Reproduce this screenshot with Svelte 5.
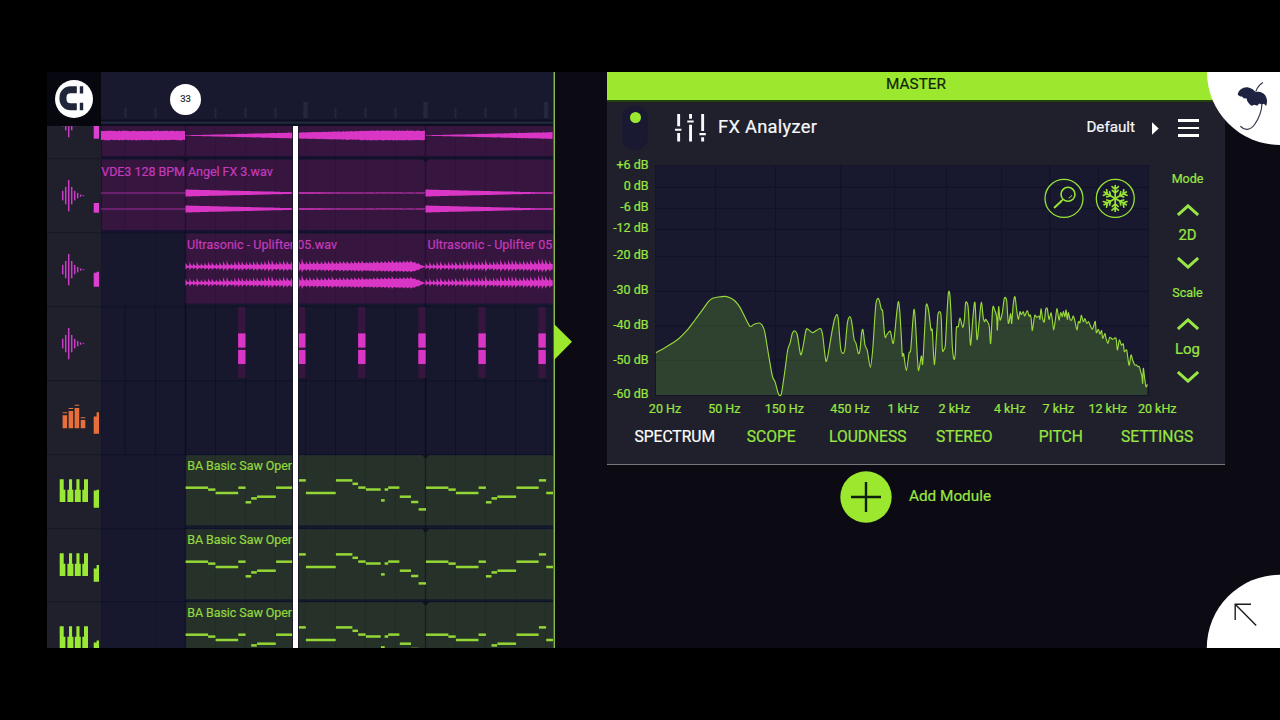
<script>
  // ---------- playlist geometry ----------
  const LANE_W = 452;
  const gridX = [24, 54.5, 114.5, 144.5, 174.5, 204.5, 234.5, 264.5, 294.5, 354.5, 384.5, 414.5, 444.5];
  const barX = [84.5, 324.5];
  const ticks = [24.5, 54.5, 114.5, 144.5, 174.5, 234.5, 264.5, 294.5, 354.5, 384.5, 414.5];
  const tallTicks = [204.5, 324.5, 445];

  // ---------- waveforms ----------
  const noise = (i) => {
    const v = Math.sin(i * 12.9898) * 43758.5453;
    return v - Math.floor(v);
  };
  function wave(x0, x1, cy, amp, step = 0.6) {
    const top = [];
    const bottom = [];
    for (let x = x0, i = 0; x <= x1; x += step, i++) {
      top.push(`${x.toFixed(1)},${(cy - amp(x - x0, i, 1)).toFixed(2)}`);
      bottom.push(`${x.toFixed(1)},${(cy + amp(x - x0, i + 500, 0.6)).toFixed(2)}`);
    }
    return 'M' + top.join('L') + 'L' + bottom.reverse().join('L') + 'Z';
  }
  const steady = (x, i) => 4.1 + noise(i) * 0.9;
  const rise = (x, i) => Math.min(4.9, 0.25 + x * 0.025) * (0.88 + noise(i) * 0.17);
  const fall = (x, i) => (x < 110 ? 3.4 - x * 0.0245 : Math.max(0.35, 0.7 - (x - 110) * 0.005)) + noise(i) * 0.15;
  const pulse = (x, i, side) => {
    const body = 0.9 + Math.pow(x / 240, 1.1) * 3.6;
    const phase = (x % 3.75) / 3.75;
    const reach = x < 78 ? 5.4 : x < 125 ? 6.6 : 4.6 - (x - 125) * 0.014;
    const spike = Math.pow(1 - phase, 3) * reach * side * (0.65 + noise(Math.floor(x / 3.75)) * 0.5);
    const tail = x > 228 ? Math.max(0.15, (240 - x) / 12) : 1;
    return (body + spike) * tail;
  };

  const row0 = [wave(0, 84, 51.5, steady), wave(84.5, 324, 51.5, rise), wave(325, 452, 51.5, rise)];
  const row1 = [35, 51].flatMap((y) => [wave(84.5, 324, y, fall), wave(324.5, 452, y, fall)]);
  const row2 = [34.8, 51.1].flatMap((y) => [wave(84.5, 324.5, y, pulse), wave(324.5, 452, y, pulse)]);
  const hits = [137.1, 197.1, 257.1, 317.3, 377.4, 437.4];

  // ---------- note pattern: x, width, y ----------
  const notes = [
    [0, 22.5, 33.7], [22.5, 7.3, 35.6], [30, 22.6, 39], [52.7, 7.3, 33.7], [60, 5.6, 48.3],
    [65.6, 5.6, 44.4], [71.5, 18.7, 42.7], [90.5, 22.3, 33.7], [113, 7.2, 26.4], [120.3, 29.8, 39],
    [150.3, 16.5, 26.4], [166.9, 5.5, 29.8], [172.6, 7.4, 33.6], [180.3, 14.8, 35.5], [195.4, 3.7, 46.4],
    [199, 3.6, 35.5], [202.6, 11.2, 33.6], [214.2, 11.2, 42.7], [225.5, 7.2, 48], [233, 7.4, 55.4]
  ];

  const waveBars = [[15.7, 9.6], [18.7, 17.4], [21.7, 31.4], [24.7, 17.4], [27.7, 9.4], [30.7, 5.4], [33.7, 2.2], [36.5, 1]];

  const tracks = [
    { kind: 'audio', h: 32, y: 42, meter: [40, 40] },
    { kind: 'audio', h: 74, y: 0, meter: [45, 45] },
    { kind: 'audio', h: 74, y: 0, meter: [40.7, 39.7] },
    { kind: 'audio', h: 74, y: 0, meter: null },
    { kind: 'drums', h: 74, y: 0, meter: [36.5, 32.3] },
    { kind: 'keys', h: 74, y: 0, meter: [36.5, 35.7] },
    { kind: 'keys', h: 73, y: 0, meter: [40.5, 37] },
    { kind: 'keys', h: 47, y: 0, meter: [41.5, 39.5] }
  ];
  const tint = { audio: '#dd3fd0', drums: '#e76f3c', keys: '#9ae835' };

  // ---------- spectrum ----------
  const dbLabels = [['+6 dB', 15.2], ['0 dB', 36], ['-6 dB', 57], ['-12 dB', 78], ['-20 dB', 105.2], ['-30 dB', 140.2], ['-40 dB', 175.2], ['-50 dB', 209.8], ['-60 dB', 244.3]];
  const hLines = [33.3, 54.3, 75.3, 102.5, 137.3, 171.8, 206.3];
  const vLines = [108.5, 168.5, 233.7, 287.5, 339.5, 394.5, 442.7, 491.5];
  const hzLabels = [['20 Hz', 58], ['50 Hz', 117.3], ['150 Hz', 177.3], ['450 Hz', 243], ['1 kHz', 296.2], ['2 kHz', 347.3], ['4 kHz', 402.7], ['7 kHz', 451.3], ['12 kHz', 500.7], ['20 kHz', 550.2]];

  const low = [
    168,248, 200,230, 235,207, 260,182, 285,150, 310,116, 325,95, 338,85, 355,81, 375,79, 390,83, 405,93, 420,112, 435,142, 450,169,
    462,163, 478,159, 486,165, 494,185, 505,250, 517,318, 525,335, 533,365, 537,375, 543,375, 547,355, 555,300, 563,240, 570,220,
    577,190, 585,183, 592,195, 602,254, 610,225, 618,180, 624,178, 637,188, 650,181, 662,176, 668,195, 677,270, 683,260, 695,190,
    703,150, 711,134, 715,150, 722,235, 729,250, 735,235, 742,160, 749,140, 755,155, 762,207, 768,220, 775,250, 780,240
  ];
  const high = [
    5,188, 9,180, 15,225, 22,242, 31,292, 38,240, 44,150, 48,100, 53,85, 58,92, 64,118, 68,124, 73,185, 76,203, 80,195, 91,184, 98,218,
    102,210, 110,130, 115,95, 119,120, 124,200, 127,257, 131,252, 139,302, 147,250, 152,240, 158,160, 162,118, 166,150, 172,260,
    176,302, 184,258, 188,282, 194,180, 198,108, 202,105, 207,130, 213,180, 217,182, 223,284, 230,190, 234,132, 241,127, 244,150,
    247,238, 251,240, 256,225, 261,130, 265,70, 269,70, 273,130, 277,230, 282,268, 286,250, 289,175, 295,170, 300,144, 308,172,
    313,150, 317,98, 324,108, 328,170, 332,225, 339,140, 345,98, 351,208, 358,150, 364,97, 370,145, 374,155, 377,148, 384,158,
    388,170, 392,220, 398,115, 404,120, 410,140, 412,180, 416,110, 420,150, 427,128, 433,85, 440,92, 445,160, 452,130, 455,160,
    460,100, 465,80, 470,120, 475,148, 480,125, 484,134, 490,125, 494,138, 502,122, 507,138, 511,135, 514,150, 517,182, 522,148,
    525,135, 530,142, 537,138, 540,147, 543,116, 548,147, 553,155, 557,118, 562,117, 567,148, 573,128, 577,150, 581,180, 586,150,
    591,115, 597,150, 602,128, 607,140, 610,124, 615,140, 618,120, 622,148, 625,127, 630,148, 635,150, 640,138, 645,155, 651,180,
    655,155, 660,158, 664,136, 670,155, 675,146, 680,160, 686,155, 690,165, 697,178, 702,165, 706,155, 709,188, 715,178, 720,192,
    725,182, 728,205, 735,190, 738,205, 744,220, 749,202, 758,208, 768,205, 772,240, 778,210, 784,225, 790,222, 793,245, 800,240,
    805,275, 808,285, 813,255, 818,270, 824,285, 830,285, 833,290, 838,290, 842,305, 846,320, 848,340, 850,295, 854,325, 858,350, 862,343
  ];
  const points = [];
  for (let i = 0; i < low.length; i += 2) points.push([(low[i] - 21) / 3, (low[i + 1] + 348) / 3]);
  for (let i = 0; i < high.length; i += 2) points.push([(high[i] + 759) / 3, (high[i + 1] + 348) / 3]);

  let curve = `M${points[0].join(',')}`;
  for (let i = 0; i < points.length - 1; i++) {
    const a = points[Math.max(0, i - 1)];
    const b = points[i];
    const c = points[i + 1];
    const d = points[Math.min(points.length - 1, i + 2)];
    const k = 7;
    const f = (n) => n.toFixed(2);
    curve += `C${f(b[0] + (c[0] - a[0]) / k)},${f(b[1] + (c[1] - a[1]) / k)} ${f(c[0] - (d[0] - b[0]) / k)},${f(c[1] - (d[1] - b[1]) / k)} ${f(c[0])},${f(c[1])}`;
  }
  const area = curve + 'V241H49Z';

  const tabs = ['SPECTRUM', 'SCOPE', 'LOUDNESS', 'STEREO', 'PITCH', 'SETTINGS'];
  const arms = [0, 60, 120, 180, 240, 300];
</script>

<div class="page">
  <div class="screen">
    <section class="playlist">
      <div class="top">
        <div class="corner">
          <svg width="38" height="38" viewBox="0 0 38 38">
            <circle cx="19" cy="19" r="19" fill="#fdffff" />
            <path d="M21.8 9.7H15.5A7.5 7.5 0 0 0 8 17.2V19.2A7.5 7.5 0 0 0 15.5 26.7H21.8" fill="none" stroke="#20263a" stroke-width="7" />
            <path d="M24.8 6.2h3.4v7.4h-3.4zM24.8 22.8h3.4v7.4h-3.4z" fill="#20263a" />
          </svg>
        </div>
        <div class="ruler">
          <svg width={LANE_W} height="54">
            {#each ticks as x}<rect x={x - 1} y="36" width="2" height="10" fill="#25273d" />{/each}
            {#each tallTicks as x}<rect x={x - 2.2} y="30" width="4.4" height="16" fill="#25273d" />{/each}
            <rect y="47.5" width="452" height="6.5" fill="#0d0f20" />
            <rect y="49.4" width="452" height="2.4" fill="#20283b" />
          </svg>
          <span class="marker">33</span>
        </div>
      </div>

      <div class="tracks">
        {#each tracks as t, n}
          <div class="track" style:height="{t.h}px">
            <svg class="head" width="54" height={t.h} viewBox="0 {t.y} 54 {t.h}">
              <rect y="0" width="54" height="1.3" fill="#171823" />
              {#if t.kind === 'audio'}
                {#each waveBars as [x, h]}
                  <rect x={x - 0.75} y={37.6 - h / 2} width="1.5" height={h} fill="#cb3cc6" />
                {/each}
              {:else if t.kind === 'drums'}
                <path fill={tint.drums} d="M15.6 35.3h4.5v13h-4.5zM21.6 31h4.6v17.3h-4.6zM27.6 28h4.6v20.3h-4.6zM33.7 40h4.6v8.3h-4.6zM15.6 32.2h4.5v1h-4.5zM21.6 28h4.6v1h-4.6zM27.6 24.8h4.6v1h-4.6zM33.7 37.3h4.6v1h-4.6z" />
              {:else}
                <path fill={tint.keys} d="M12.7 25.3h4v10.5h1.7V48h-5.7zM22 25.3h3.1v10.5h1.3V48h-6V35.8H22zM29.4 25.3h3.1v10.5h1.3V48h-6V35.8h1.6zM37 25.3h4V48h-5.7V35.8H37z" />
              {/if}
              {#if t.meter}
                {@const base = t.kind === 'audio' ? 54.7 : 53.7}
                <path fill={tint[t.kind]} d="M46.7 {base}V{t.meter[0]}h2.9V{t.meter[1]}H52V{base}z" />
              {/if}
            </svg>

            <svg class="lane" width={LANE_W} height={t.h} viewBox="0 {t.y} {LANE_W} {t.h}">
              <rect y="-0.6" width="452" height="1.8" fill="#10112a" />
              {#if n === 0}
                <rect y="0" width="452" height="72.3" fill="#36163f" />
              {:else if n === 1}
                <rect y="1.5" width="452" height="70.5" fill="#36163f" />
                <rect y="72" width="452" height="2" fill="#161230" />
              {:else if n === 2}
                <rect x="84.5" y="1.5" width="368" height="70" fill="#36163f" />
              {:else if n > 4}
                <rect x="84.5" y="1.2" width="368" height="70.3" fill="#263229" />
                <rect x="84.5" y="71.5" width="368" height="2.5" fill="#131a2b" />
              {/if}

              <rect x="0" width="1" height="74" y="0" fill="#131430" />
              {#each gridX as x}
                <rect x={x - 0.5} width="1" height="74" fill="#0b0c22" opacity={n < 3 || n > 4 ? 0.15 : 0.6} />
              {/each}
              {#each barX as x}
                <rect x={x - 0.7} width="1.4" height="74" fill="#09081e" opacity={n < 3 || n > 4 ? 0.5 : 0.8} />
              {/each}

              {#if n === 0}
                {#each row0 as d}<path {d} fill="#da36c6" />{/each}
                <rect y="72.3" width="452" height="2" fill="#191030" />
              {:else if n === 1}
                <rect x="0" y="34.5" width="84.5" height="1" fill="#9d2b9a" />
                <rect x="0" y="50.5" width="84.5" height="1" fill="#9d2b9a" />
                {#each row1 as d}<path {d} fill="#da36c6" />{/each}
                <text x="0.2" y="17.5" textLength="171.5">VDE3 128 BPM Angel FX 3.wav</text>
              {:else if n === 2}
                {#each row2 as d}<path {d} fill="#da36c6" />{/each}
                <text x="86" y="17.2" textLength="150">Ultrasonic - Uplifter 05.wav</text>
                <text x="326.6" y="17.2" textLength="124.8">Ultrasonic - Uplifter 05</text>
              {:else if n === 3}
                {#each hits as x}
                  <rect {x} y="1" width="7.4" height="71" fill="#36163f" />
                  <rect {x} y="27.4" width="7.4" height="14.2" fill="#da36c6" />
                  <rect {x} y="44" width="7.4" height="14" fill="#da36c6" />
                {/each}
              {:else if n > 4}
                {#each [84.6, 324.9] as start}
                  {#each notes as [x, w, y]}
                    <rect x={start + x} y={y - 1.25} width={w} height="2.5" fill="#93d636" />
                  {/each}
                {/each}
                <text class="green" x="86.2" y="16.4" textLength="107.5">BA Basic Saw Open</text>
              {/if}
              {#if n === 1 || n > 4}
                <path d="M320.8 .3h7.6l-2.6 3.4h-2.4z" fill="#10121f" />
              {/if}
              {#if n === 1}
                <path d="M80.8 .3h7.6l-2.6 3.4h-2.4z" fill="#10121f" />
              {/if}
            </svg>
          </div>
        {/each}
        <div class="playhead"></div>
      </div>
    </section>

    <div class="splitter">
      <svg width="18" height="36" viewBox="0 0 18 36"><path d="M0 0L18 17.8L0 36z" fill="#9be82f" /></svg>
    </div>

    <main class="rack">
      <section class="module">
        <div class="title">MASTER</div>
        <header>
          <span class="toggle"><i></i></span>
          <svg class="faders" width="32" height="28" viewBox="0 0 32 28" fill="#f6f8fa">
            <path d="M2.2 0h2.9v12.3H2.2zM0 14.7h6.4v2.1H0zM2.2 19h2.9v8.5H2.2zM14.1 0h2.9v4.7h-2.9zM12.3 6.5h6.4v2.1h-6.4zM14.1 10.7h2.9v16.8h-2.9zM26.2 0h2.9v17h-2.9zM24.4 19.1h6.4v2.1h-6.4zM26.2 23.2h2.9v4.3h-2.9z" />
          </svg>
          <h1>FX Analyzer</h1>
          <span class="preset">Default</span>
          <svg class="next" width="7" height="13" viewBox="0 0 7 13"><path d="M0 .3L6.7 6.5L0 12.7z" fill="#fff" /></svg>
          <span class="burger"><i></i><i></i><i></i></span>
        </header>

        <div class="analyzer">
          <svg class="chart" width="552" height="264" viewBox="0 0 552 264">
            <rect x="49" y="12" width="492" height="229" fill="#18182f" />
            {#each hLines as y}<rect x="49" y={y - 0.5} width="492" height="1" fill="#111228" />{/each}
            {#each vLines as x}<rect x={x - 0.5} y="12" width="1" height="229" fill="#111228" />{/each}
            <rect x="48.5" y="11.5" width="493" height="230" fill="none" stroke="#14152a" />
            <path d={area} fill="#2f412f" />
            {#each hLines.slice(-2) as y}<rect x="49" y={y - 0.5} width="480" height="1" fill="#15251f" opacity="0.18" />{/each}
            <path d={curve} fill="none" stroke="#98d83a" stroke-width="1.15" stroke-linejoin="round" />
            {#each dbLabels as [label, y]}<text x="41.6" {y} text-anchor="end">{label}</text>{/each}
            {#each hzLabels as [label, x]}<text {x} y="258.6" text-anchor="middle">{label}</text>{/each}

            <g fill="none" stroke="#98e535" stroke-linecap="round">
              <circle cx="457" cy="44.4" r="19" stroke-width="1.3" />
              <circle cx="461" cy="40.3" r="7" stroke-width="1.6" />
              <path d="M464.6 41.6a4 4 0 0 1-2.6 2.4" stroke-width="1" />
              <path d="M455.8 45.6L454 47.4" stroke-width="1.5" />
              <path d="M454 47.4L447.6 53.4" stroke-width="2" />
              <circle cx="508.3" cy="44.4" r="19" stroke-width="1.3" />
              <g transform="translate(508.2 44.4)" stroke-width="1.7">
                {#each arms as a}
                  <path transform="rotate({a})" d="M0 0V-12.8M0-5.4L-2.9-8.1M0-5.4L2.9-8.1M0-9L-3.2-11.8M0-9L3.2-11.8" />
                {/each}
              </g>
            </g>
          </svg>

          <aside>
            <div class="picker">
              <span class="name">Mode</span>
              <svg width="22" height="12" viewBox="0 0 22 12"><path d="M.8 11L11 1.9L21.2 11" /></svg>
              <span class="value">2D</span>
              <svg width="22" height="12" viewBox="0 0 22 12"><path d="M.8 1L11 10.1L21.2 1" /></svg>
            </div>
            <div class="picker">
              <span class="name">Scale</span>
              <svg width="22" height="12" viewBox="0 0 22 12"><path d="M.8 11L11 1.9L21.2 11" /></svg>
              <span class="value">Log</span>
              <svg width="22" height="12" viewBox="0 0 22 12"><path d="M.8 1L11 10.1L21.2 1" /></svg>
            </div>
          </aside>
        </div>

        <nav>
          {#each tabs as tab, i}<span class:active={i === 0}>{tab}</span>{/each}
        </nav>
      </section>

      <div class="add">
        <svg width="52" height="52" viewBox="0 0 52 52">
          <circle cx="26" cy="26" r="25.7" fill="#9be82f" />
          <path d="M11 26H41M26 11V41" stroke="#10200c" stroke-width="2.4" />
        </svg>
        <span>Add Module</span>
      </div>
    </main>

    <div class="bubble upper">
      <svg width="74" height="74" viewBox="0 0 74 74">
        <circle cx="74" cy="0" r="73" fill="#fff" />
        <path d="M56.6 10.7C53.4 12.5 51.4 15.3 49.9 19.2M56 31C55.8 39 53.5 45.5 48.6 52.5C44.5 58.3 38.5 58.8 34.8 54.5" fill="none" stroke="#3a3d50" stroke-width="1.2" stroke-linecap="round" />
        <path d="M31.7 22.7C32.7 17.5 37.5 14.6 42.3 15.4C45.7 16 48 18 49.8 20.2C53 19 57 20.3 59.2 23.2C61.3 26.2 61.6 30 60.2 34L57.9 31.8L55.6 32.5L53.3 31.6L51.2 33.8L48.7 32.8L45.4 33.7C42.5 31.7 40.8 29.4 40.7 26.6L37.6 26.3L36 24.4L34.2 24.6z" fill="#1d2340" />
      </svg>
    </div>
    <div class="bubble lower">
      <svg width="74" height="74" viewBox="0 0 74 74">
        <circle cx="74" cy="74" r="73.2" fill="#fff" />
        <path d="M45 30.2H29.2V46M29.2 30.2L50.2 51.4" fill="none" stroke="#1c1c1c" stroke-width="1.4" />
      </svg>
    </div>
  </div>
</div>

<style>
  :global(body) {
    background: #000;
  }
  .page {
    box-sizing: border-box;
    width: 1280px;
    height: 720px;
    padding: 72px 0 72px 47px;
    background: #000;
    font-family: Roboto, 'Liberation Sans', sans-serif;
    font-size: 12.5px;
    font-weight: 400;
    color: #99e640;
    -webkit-text-stroke: 0.2px;
    overflow: hidden;
  }
  svg {
    display: block;
    flex: none;
  }
  text {
    stroke-width: 0.2px;
  }
  .screen {
    position: relative;
    display: flex;
    height: 576px;
    background: #0c0b14;
    overflow: hidden;
  }

  .playlist {
    display: flex;
    flex-direction: column;
    width: 506px;
    flex: none;
  }
  .top {
    display: flex;
    height: 54px;
    flex: none;
  }
  .corner {
    display: flex;
    align-items: center;
    justify-content: center;
    width: 54px;
    background: #07070f;
  }
  .ruler {
    position: relative;
    width: 452px;
    background: #18182f;
  }
  .marker {
    position: absolute;
    left: 69px;
    top: 12px;
    width: 31px;
    height: 31px;
    border-radius: 50%;
    background: #fff;
    color: #1c1f2b;
    font-size: 9.5px;
    line-height: 29px;
    text-align: center;
  }
  .tracks {
    position: relative;
    flex: 1;
    overflow: hidden;
  }
  .track {
    display: flex;
  }
  .head {
    background: #1f202c;
  }
  .lane {
    background: #17172e;
  }
  .lane text {
    fill: #c63abd;
    stroke: #c63abd;
  }
  .lane .green {
    fill: #92d740;
    stroke: #92d740;
  }
  .playhead {
    position: absolute;
    left: 246px;
    top: 0;
    bottom: 0;
    width: 4.6px;
    background: #fff;
    box-shadow: 0 0 0 0.8px #1c1428;
  }

  .splitter {
    display: flex;
    align-items: center;
    box-sizing: border-box;
    width: 54px;
    flex: none;
    padding-bottom: 36px;
    background: linear-gradient(90deg, #4d6235 1px, #8ab94a 1px, #8ab94a 2px, transparent 2px);
  }
  .splitter svg {
    margin-left: 1px;
  }

  .rack {
    display: flex;
    flex-direction: column;
    width: 618px;
    flex: none;
  }
  .module {
    box-sizing: border-box;
    height: 393px;
    background: #20202d;
    border-bottom: 1px solid #77787c;
  }
  .title {
    height: 28px;
    border-bottom: 2px solid #24420d;
    background: #9be82f;
    color: #14240a;
    font-size: 15.3px;
    line-height: 25px;
    text-align: center;
  }
  header {
    display: flex;
    align-items: center;
    height: 52px;
    padding: 0 26px 0 15px;
    color: #f6f7fa;
  }
  .toggle {
    display: flex;
    justify-content: center;
    box-sizing: border-box;
    width: 26px;
    height: 44px;
    padding-top: 6px;
    border-radius: 12px;
    background: #191a32;
  }
  .toggle i {
    width: 11px;
    height: 11px;
    border-radius: 50%;
    background: #9be82f;
  }
  .faders {
    margin-left: 27px;
    margin-top: -1px;
  }
  h1 {
    flex: 1;
    margin: -2px 0 0 11px;
    font-size: 18.3px;
    font-weight: 400;
    letter-spacing: 0.3px;
    line-height: 20px;
  }
  .preset {
    margin-top: -3px;
    font-size: 15.2px;
  }
  .next {
    margin-left: 17px;
  }
  .burger {
    display: flex;
    flex-direction: column;
    gap: 5px;
    width: 21px;
    margin-left: 19px;
  }
  .burger i {
    height: 2.7px;
    background: #fff;
  }

  .analyzer {
    display: flex;
    height: 264px;
  }
  .chart {
    overflow: visible;
  }
  .chart text {
    fill: #99e640;
    stroke: #99e640;
  }
  aside {
    display: flex;
    flex-direction: column;
    gap: 14px;
    width: 57px;
    padding-top: 17px;
  }
  .picker {
    display: flex;
    flex-direction: column;
    align-items: center;
    height: 100px;
  }
  .picker path {
    fill: none;
    stroke: #98e545;
    stroke-width: 3;
  }
  .name {
    height: 16px;
    margin-bottom: 17px;
    line-height: 16px;
  }
  .value {
    height: 20px;
    margin: 10px 0 11px;
    font-size: 14.9px;
    line-height: 19px;
  }

  nav {
    display: grid;
    grid-template-columns: repeat(6, 96.5px);
    padding: 9px 0 0 19.5px;
    font-size: 15.6px;
    line-height: 20px;
    text-align: center;
  }
  nav .active {
    color: #fff;
  }

  .add {
    display: flex;
    align-items: center;
    gap: 17px;
    padding: 6px 0 0 233px;
    font-size: 15.3px;
  }
  .add span {
    margin-top: -3px;
  }

  .bubble {
    position: absolute;
    right: 0;
    width: 74px;
    height: 74px;
  }
  .upper {
    top: 0;
  }
  .lower {
    bottom: 0;
  }
</style>
